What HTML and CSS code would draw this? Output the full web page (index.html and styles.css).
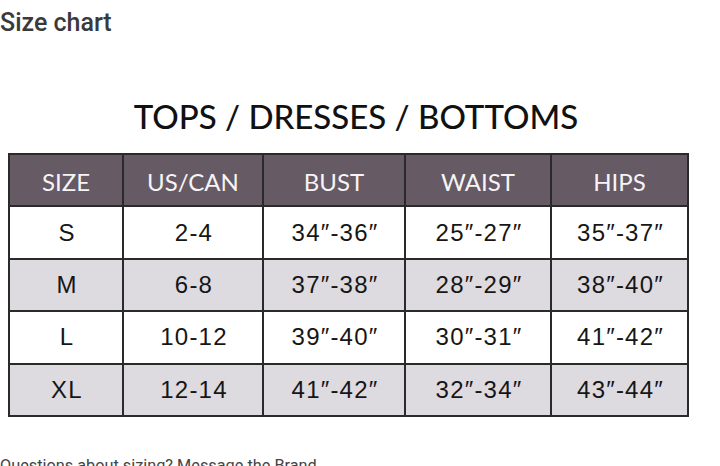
FILE: index.html
```html
<!DOCTYPE html>
<html>
<head>
<meta charset="utf-8">
<link rel="stylesheet" href="styles.css">
</head>
<body>
<div class="page">
  <h2 class="page-title">Size chart</h2>
  <div class="chart">
    <h1 class="chart-title">TOPS / DRESSES / BOTTOMS</h1>
    <table class="size-table">
      <colgroup>
        <col class="c1"><col class="c2"><col class="c3"><col class="c4"><col class="c5">
      </colgroup>
      <thead>
        <tr><th>SIZE</th><th>US/CAN</th><th>BUST</th><th>WAIST</th><th>HIPS</th></tr>
      </thead>
      <tbody>
        <tr><td>S</td><td>2-4</td><td>34″-36″</td><td>25″-27″</td><td>35″-37″</td></tr>
        <tr class="alt"><td>M</td><td>6-8</td><td>37″-38″</td><td>28″-29″</td><td>38″-40″</td></tr>
        <tr><td>L</td><td>10-12</td><td>39″-40″</td><td>30″-31″</td><td>41″-42″</td></tr>
        <tr class="alt"><td>XL</td><td>12-14</td><td>41″-42″</td><td>32″-34″</td><td>43″-44″</td></tr>
      </tbody>
    </table>
  </div>
  <p class="note">Questions about sizing? Message the Brand</p>
</div>
</body>
</html>
```
FILE: styles.css
```css
html, body {
  margin: 0;
  padding: 0;
  background: #ffffff;
}
body {
  width: 720px;
  height: 466px;
  overflow: hidden;
}
.page {
  display: flex;
  flex-direction: column;
}
.page-title {
  margin: 0;
  padding-top: 7px;
  font-family: Roboto, "Liberation Sans", sans-serif;
  font-weight: 500;
  font-size: 25px;
  line-height: 31px;
  color: #3a3a3a;
}
.chart {
  padding-left: 8px;
  width: 680px;
  display: flex;
  flex-direction: column;
}
.chart-title {
  margin: 58px 0 0 0;
  text-align: center;
  padding-left: 16px;
  font-family: Lato, "Liberation Sans", sans-serif;
  font-weight: 500;
  font-size: 33px;
  line-height: 40px;
  color: #111111;
}
.size-table {
  margin-top: 17px;
  width: 679px;
  border-collapse: collapse;
  table-layout: fixed;
  border: 2px solid #2a2a2a;
}
.c1 { width: 114px; }
.c2 { width: 140px; }
.c3 { width: 142px; }
.c4 { width: 146px; }
.c5 { width: 137px; }
.size-table th,
.size-table td {
  border: 2px solid #2a2a2a;
  text-align: center;
  padding: 0;
  height: 50.4px;
}
.size-table th {
  background: #665a64;
  color: #f6f4f6;
  font-family: Lato, "Liberation Sans", sans-serif;
  font-weight: 400;
  font-size: 24px;
  padding-top: 2px;
  height: 48.4px;
}
.size-table td {
  background: #ffffff;
  color: #161616;
  font-family: "Liberation Sans", Arial, sans-serif;
  font-size: 24px;
  letter-spacing: 1.2px;
  padding-left: 2px;
}
.size-table tr.alt td {
  background: #dddbe0;
}
.note {
  margin: 39px 0 0 0;
  font-family: Roboto, "Liberation Sans", sans-serif;
  font-size: 16.3px;
  line-height: 20px;
  color: #444444;
}
```
